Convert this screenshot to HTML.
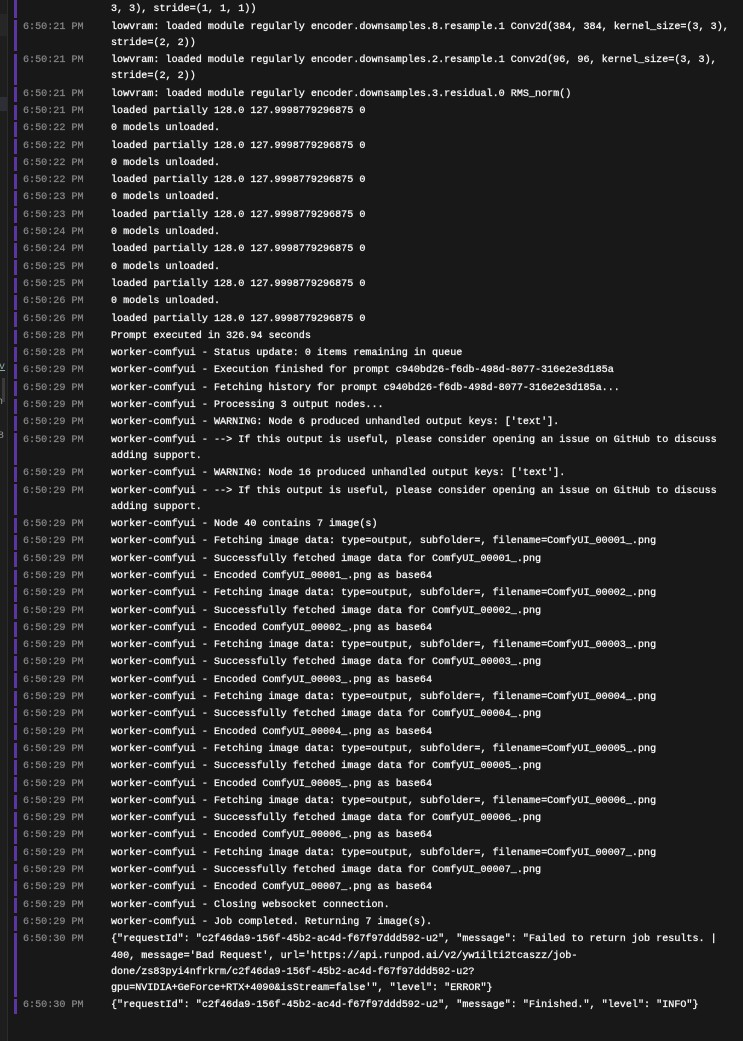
<!DOCTYPE html>
<html><head><meta charset="utf-8"><style>
html,body{margin:0;padding:0;}
body{width:743px;height:1041px;background:#181818;overflow:hidden;position:relative;font-family:"Liberation Mono",monospace;font-size:10.1px;}
.side{position:absolute;left:0;top:0;width:7px;height:1041px;background:#1e1e1e;border-right:1px solid #2c2c2c;overflow:hidden;color:#999;font-size:10px;}
.list{position:absolute;left:0;top:-14.6px;width:743px;}
.r{position:relative;padding:0.5px 0;line-height:16.3px;}
.r:before{content:"";position:absolute;left:14px;width:3px;top:1.2px;bottom:1.2px;background:#5b35a3;}
.t{position:absolute;left:23px;top:0.5px;color:#858585;-webkit-text-stroke:0.25px #858585;}
.m{margin-left:111px;color:#f6f6f6;white-space:pre;-webkit-text-stroke:0.3px #f6f6f6;}
</style></head><body>
<div class="side">
<div style="position:absolute;top:14px;left:0;width:7px;height:22px;background:#262626"></div>
<div style="position:absolute;top:97px;left:0;width:7px;height:14px;background:#2e2e36"></div>
<div style="position:absolute;top:362px;left:-1px;color:#8aa;text-decoration:underline">v</div>
<div style="position:absolute;top:378px;left:2px;width:3px;height:24px;background:#3a3a3a"></div>
<div style="position:absolute;top:397px;left:-3px">h</div>
<div style="position:absolute;top:431px;left:-2px">8</div>
</div>
<div class="list">
<div class="r"><span class="t">6:50:21 PM</span><div class="m">lowvram: loaded module regularly encoder.downsamples.8.residual.0 Conv3d(384, 384, kernel_size=(3,
3, 3), stride=(1, 1, 1))</div></div>
<div class="r"><span class="t">6:50:21 PM</span><div class="m">lowvram: loaded module regularly encoder.downsamples.8.resample.1 Conv2d(384, 384, kernel_size=(3, 3),
stride=(2, 2))</div></div>
<div class="r"><span class="t">6:50:21 PM</span><div class="m">lowvram: loaded module regularly encoder.downsamples.2.resample.1 Conv2d(96, 96, kernel_size=(3, 3),
stride=(2, 2))</div></div>
<div class="r"><span class="t">6:50:21 PM</span><div class="m">lowvram: loaded module regularly encoder.downsamples.3.residual.0 RMS_norm()</div></div>
<div class="r"><span class="t">6:50:21 PM</span><div class="m">loaded partially 128.0 127.9998779296875 0</div></div>
<div class="r"><span class="t">6:50:22 PM</span><div class="m">0 models unloaded.</div></div>
<div class="r"><span class="t">6:50:22 PM</span><div class="m">loaded partially 128.0 127.9998779296875 0</div></div>
<div class="r"><span class="t">6:50:22 PM</span><div class="m">0 models unloaded.</div></div>
<div class="r"><span class="t">6:50:22 PM</span><div class="m">loaded partially 128.0 127.9998779296875 0</div></div>
<div class="r"><span class="t">6:50:23 PM</span><div class="m">0 models unloaded.</div></div>
<div class="r"><span class="t">6:50:23 PM</span><div class="m">loaded partially 128.0 127.9998779296875 0</div></div>
<div class="r"><span class="t">6:50:24 PM</span><div class="m">0 models unloaded.</div></div>
<div class="r"><span class="t">6:50:24 PM</span><div class="m">loaded partially 128.0 127.9998779296875 0</div></div>
<div class="r"><span class="t">6:50:25 PM</span><div class="m">0 models unloaded.</div></div>
<div class="r"><span class="t">6:50:25 PM</span><div class="m">loaded partially 128.0 127.9998779296875 0</div></div>
<div class="r"><span class="t">6:50:26 PM</span><div class="m">0 models unloaded.</div></div>
<div class="r"><span class="t">6:50:26 PM</span><div class="m">loaded partially 128.0 127.9998779296875 0</div></div>
<div class="r"><span class="t">6:50:28 PM</span><div class="m">Prompt executed in 326.94 seconds</div></div>
<div class="r"><span class="t">6:50:28 PM</span><div class="m">worker-comfyui - Status update: 0 items remaining in queue</div></div>
<div class="r"><span class="t">6:50:29 PM</span><div class="m">worker-comfyui - Execution finished for prompt c940bd26-f6db-498d-8077-316e2e3d185a</div></div>
<div class="r"><span class="t">6:50:29 PM</span><div class="m">worker-comfyui - Fetching history for prompt c940bd26-f6db-498d-8077-316e2e3d185a...</div></div>
<div class="r"><span class="t">6:50:29 PM</span><div class="m">worker-comfyui - Processing 3 output nodes...</div></div>
<div class="r"><span class="t">6:50:29 PM</span><div class="m">worker-comfyui - WARNING: Node 6 produced unhandled output keys: ['text'].</div></div>
<div class="r"><span class="t">6:50:29 PM</span><div class="m">worker-comfyui - --&gt; If this output is useful, please consider opening an issue on GitHub to discuss
adding support.</div></div>
<div class="r"><span class="t">6:50:29 PM</span><div class="m">worker-comfyui - WARNING: Node 16 produced unhandled output keys: ['text'].</div></div>
<div class="r"><span class="t">6:50:29 PM</span><div class="m">worker-comfyui - --&gt; If this output is useful, please consider opening an issue on GitHub to discuss
adding support.</div></div>
<div class="r"><span class="t">6:50:29 PM</span><div class="m">worker-comfyui - Node 40 contains 7 image(s)</div></div>
<div class="r"><span class="t">6:50:29 PM</span><div class="m">worker-comfyui - Fetching image data: type=output, subfolder=, filename=ComfyUI_00001_.png</div></div>
<div class="r"><span class="t">6:50:29 PM</span><div class="m">worker-comfyui - Successfully fetched image data for ComfyUI_00001_.png</div></div>
<div class="r"><span class="t">6:50:29 PM</span><div class="m">worker-comfyui - Encoded ComfyUI_00001_.png as base64</div></div>
<div class="r"><span class="t">6:50:29 PM</span><div class="m">worker-comfyui - Fetching image data: type=output, subfolder=, filename=ComfyUI_00002_.png</div></div>
<div class="r"><span class="t">6:50:29 PM</span><div class="m">worker-comfyui - Successfully fetched image data for ComfyUI_00002_.png</div></div>
<div class="r"><span class="t">6:50:29 PM</span><div class="m">worker-comfyui - Encoded ComfyUI_00002_.png as base64</div></div>
<div class="r"><span class="t">6:50:29 PM</span><div class="m">worker-comfyui - Fetching image data: type=output, subfolder=, filename=ComfyUI_00003_.png</div></div>
<div class="r"><span class="t">6:50:29 PM</span><div class="m">worker-comfyui - Successfully fetched image data for ComfyUI_00003_.png</div></div>
<div class="r"><span class="t">6:50:29 PM</span><div class="m">worker-comfyui - Encoded ComfyUI_00003_.png as base64</div></div>
<div class="r"><span class="t">6:50:29 PM</span><div class="m">worker-comfyui - Fetching image data: type=output, subfolder=, filename=ComfyUI_00004_.png</div></div>
<div class="r"><span class="t">6:50:29 PM</span><div class="m">worker-comfyui - Successfully fetched image data for ComfyUI_00004_.png</div></div>
<div class="r"><span class="t">6:50:29 PM</span><div class="m">worker-comfyui - Encoded ComfyUI_00004_.png as base64</div></div>
<div class="r"><span class="t">6:50:29 PM</span><div class="m">worker-comfyui - Fetching image data: type=output, subfolder=, filename=ComfyUI_00005_.png</div></div>
<div class="r"><span class="t">6:50:29 PM</span><div class="m">worker-comfyui - Successfully fetched image data for ComfyUI_00005_.png</div></div>
<div class="r"><span class="t">6:50:29 PM</span><div class="m">worker-comfyui - Encoded ComfyUI_00005_.png as base64</div></div>
<div class="r"><span class="t">6:50:29 PM</span><div class="m">worker-comfyui - Fetching image data: type=output, subfolder=, filename=ComfyUI_00006_.png</div></div>
<div class="r"><span class="t">6:50:29 PM</span><div class="m">worker-comfyui - Successfully fetched image data for ComfyUI_00006_.png</div></div>
<div class="r"><span class="t">6:50:29 PM</span><div class="m">worker-comfyui - Encoded ComfyUI_00006_.png as base64</div></div>
<div class="r"><span class="t">6:50:29 PM</span><div class="m">worker-comfyui - Fetching image data: type=output, subfolder=, filename=ComfyUI_00007_.png</div></div>
<div class="r"><span class="t">6:50:29 PM</span><div class="m">worker-comfyui - Successfully fetched image data for ComfyUI_00007_.png</div></div>
<div class="r"><span class="t">6:50:29 PM</span><div class="m">worker-comfyui - Encoded ComfyUI_00007_.png as base64</div></div>
<div class="r"><span class="t">6:50:29 PM</span><div class="m">worker-comfyui - Closing websocket connection.</div></div>
<div class="r"><span class="t">6:50:29 PM</span><div class="m">worker-comfyui - Job completed. Returning 7 image(s).</div></div>
<div class="r"><span class="t">6:50:30 PM</span><div class="m">{"requestId": "c2f46da9-156f-45b2-ac4d-f67f97ddd592-u2", "message": "Failed to return job results. |
400, message='Bad Request', url='https://api.runpod.ai/v2/yw1ilti2tcaszz/job-
done/zs83pyi4nfrkrm/c2f46da9-156f-45b2-ac4d-f67f97ddd592-u2?
gpu=NVIDIA+GeForce+RTX+4090&amp;isStream=false'", "level": "ERROR"}</div></div>
<div class="r"><span class="t">6:50:30 PM</span><div class="m">{"requestId": "c2f46da9-156f-45b2-ac4d-f67f97ddd592-u2", "message": "Finished.", "level": "INFO"}</div></div>
</div>
</body></html>
